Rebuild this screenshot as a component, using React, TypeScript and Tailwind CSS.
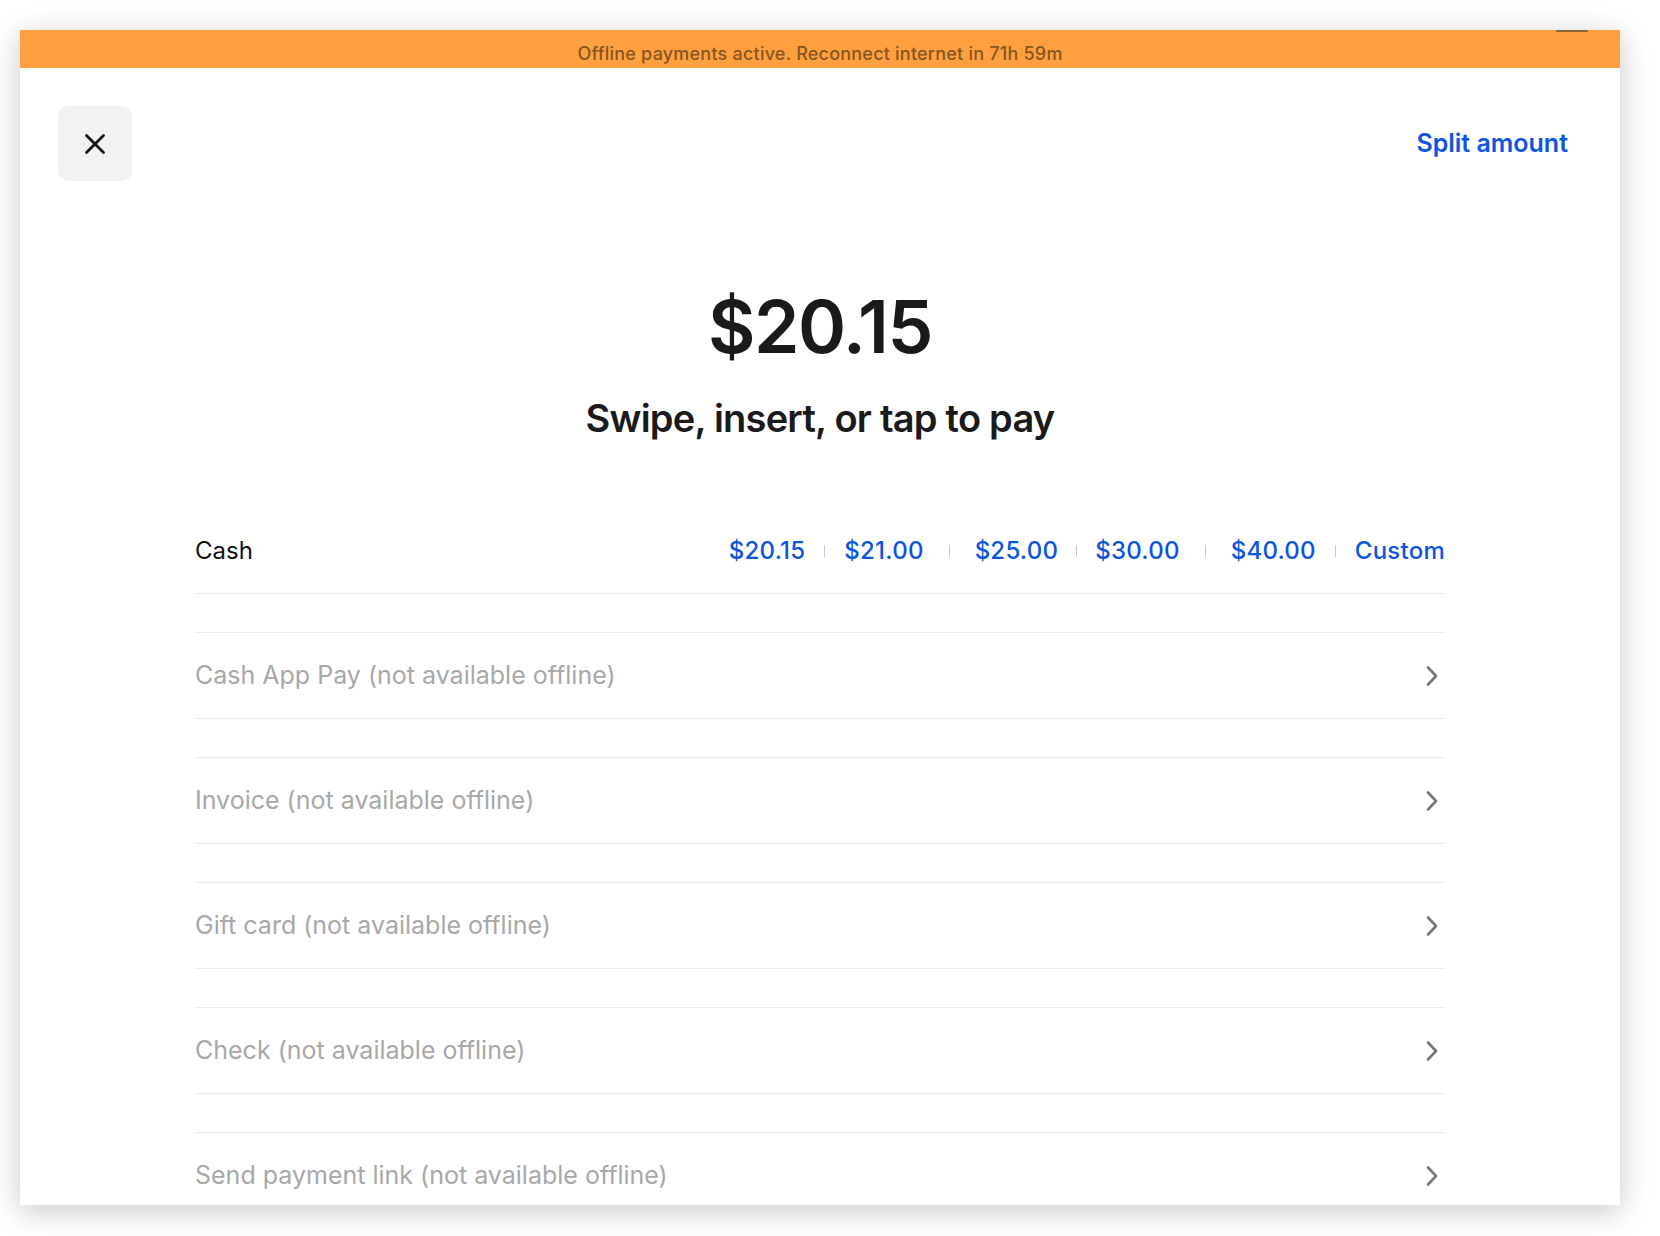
const font = { fontFamily: "Inter, 'Liberation Sans', sans-serif" };

const amounts = [
  { label: "$20.15", gap: "mx-[19px]" },
  { label: "$21.00", gap: "mx-[25px]" },
  { label: "$25.00", gap: "mx-[18px]" },
  { label: "$30.00", gap: "mx-[25px]" },
  { label: "$40.00", gap: "mx-[19px]" },
  { label: "Custom", gap: "" },
];

const methods = [
  "Cash App Pay (not available offline)",
  "Invoice (not available offline)",
  "Gift card (not available offline)",
  "Check (not available offline)",
  "Send payment link (not available offline)",
];

function Chevron() {
  return (
    <svg width="12" height="22" viewBox="0 0 12 22" fill="none" className="mr-[7px]">
      <path d="M2 2.5 L10 11 L2 19.5" stroke="#777" strokeWidth="2.6" strokeLinecap="round" strokeLinejoin="round" />
    </svg>
  );
}

function MethodRow({ label }: { label: string }) {
  return (
    <div className="mt-[38px] h-[87px] shrink-0 border-y border-[#ececec] flex items-center justify-between">
      <span className="text-[25px] text-[#a8a8a8] leading-none">{label}</span>
      <Chevron />
    </div>
  );
}

export default function App() {
  return (
    <div className="w-[1660px] h-[1236px] bg-white pt-[30px] pl-[20px] pr-[40px]" style={font}>
      <div className="relative h-[1175px] bg-white overflow-hidden shadow-[0_6px_28px_rgba(0,0,0,0.22)] flex flex-col">
        <div className="h-[38px] shrink-0 bg-[#ff9f40] flex items-center justify-center pt-[9px]">
          <span className="text-[18px] font-medium tracking-[0.012em] text-[#85561f] leading-none">
            Offline payments active. Reconnect internet in 71h 59m
          </span>
        </div>
        <div className="absolute top-0 right-[32px] w-[32px] h-[2px] bg-[#8a6438] rounded-full" />

        <div className="flex items-center justify-between pl-[38px] pr-[52px] pt-[38px]">
          <button className="w-[74px] h-[75px] rounded-[10px] bg-[#f2f2f2] flex items-center justify-center">
            <svg width="24" height="24" viewBox="0 0 24 24" fill="none">
              <path d="M3.5 3.5 L20.5 20.5 M20.5 3.5 L3.5 20.5" stroke="#111" strokeWidth="2.8" strokeLinecap="round" />
            </svg>
          </button>
          <span className="text-[25px] font-semibold text-[#0b55e0]">Split amount</span>
        </div>

        <div className="mt-[110px] text-center text-[73px] leading-[72px] font-semibold tracking-[-0.02em] text-[#1a1a1a]">
          $20.15
        </div>
        <div className="mt-[33px] text-center text-[38px] leading-[44px] font-semibold tracking-[-0.02em] text-[#1a1a1a]">
          Swipe, insert, or tap to pay
        </div>

        <div className="mx-[175px] flex flex-col">
          <div className="mt-[68px] h-[86px] shrink-0 border-b border-[#ececec] flex items-center justify-between">
            <span className="text-[24px] text-[#111] leading-none">Cash</span>
            <div className="flex items-center">
              {amounts.map((a) => (
                <div key={a.label} className="flex items-center">
                  <span className="text-[24px] font-medium tracking-[0.01em] text-[#0b55e0] leading-none">{a.label}</span>
                  {a.gap && <span className={`${a.gap} w-px h-[12px] bg-[#c9c9c9]`} />}
                </div>
              ))}
            </div>
          </div>
          {methods.map((m) => (
            <MethodRow key={m} label={m} />
          ))}
        </div>
      </div>
    </div>
  );
}
